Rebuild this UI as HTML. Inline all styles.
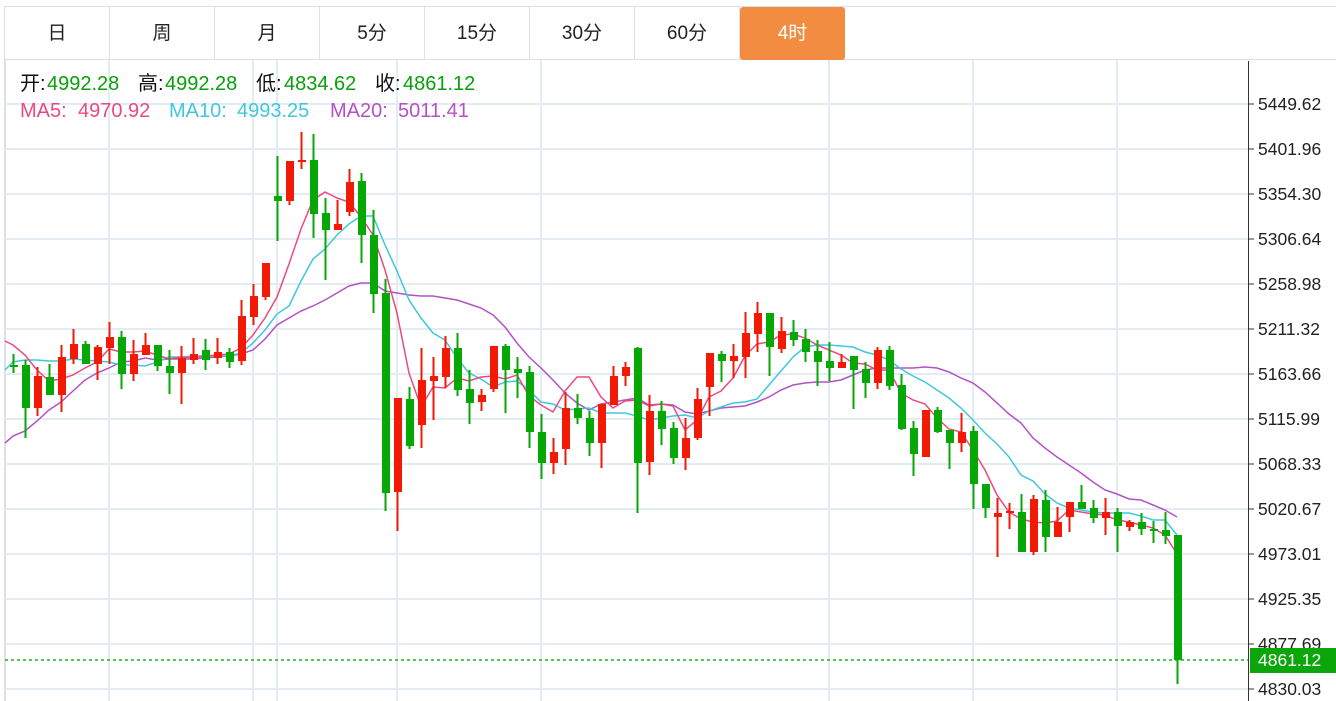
<!DOCTYPE html>
<html><head><meta charset="utf-8">
<style>
html,body{margin:0;padding:0;background:#fff;width:1336px;height:701px;overflow:hidden;font-family:"Liberation Sans","Noto Sans CJK SC",sans-serif;}
.tabs{position:absolute;left:4px;top:6px;width:1332px;height:54px;border-top:1px solid #dcdfe3;border-bottom:1px solid #dcdfe3;border-left:1px solid #dcdfe3;box-sizing:border-box;}
.tab{position:absolute;top:0;height:53px;width:105px;border-right:1px solid #dcdfe3;box-sizing:border-box;text-align:center;line-height:53px;font-size:19px;color:#222;}
.tab.on{background:#f28c41;color:#fff;border-radius:3px;border-right:none;top:0px;height:53px;}
.h{position:absolute;font-size:20px;white-space:pre;line-height:24px;}
.k{color:#111}.v{color:#09a009}
</style></head><body>
<svg width="1336" height="701" style="position:absolute;left:0;top:0" xmlns="http://www.w3.org/2000/svg">
<g stroke="#e4ecf3" stroke-width="2">
<line x1="5" y1="60" x2="5" y2="701" stroke="#dcdfe3"/>
<line x1="109" y1="60" x2="109" y2="701"/><line x1="253" y1="60" x2="253" y2="701"/><line x1="277" y1="60" x2="277" y2="701"/><line x1="397" y1="60" x2="397" y2="701"/><line x1="541" y1="60" x2="541" y2="701"/><line x1="829" y1="60" x2="829" y2="701"/><line x1="973" y1="60" x2="973" y2="701"/><line x1="1117" y1="60" x2="1117" y2="701"/>
<line x1="5" y1="104" x2="1248" y2="104"/><line x1="5" y1="149" x2="1248" y2="149"/><line x1="5" y1="194" x2="1248" y2="194"/><line x1="5" y1="239" x2="1248" y2="239"/><line x1="5" y1="284" x2="1248" y2="284"/><line x1="5" y1="329" x2="1248" y2="329"/><line x1="5" y1="374" x2="1248" y2="374"/><line x1="5" y1="419" x2="1248" y2="419"/><line x1="5" y1="464" x2="1248" y2="464"/><line x1="5" y1="509" x2="1248" y2="509"/><line x1="5" y1="554" x2="1248" y2="554"/><line x1="5" y1="599" x2="1248" y2="599"/><line x1="5" y1="644" x2="1248" y2="644"/><line x1="5" y1="689" x2="1248" y2="689"/>
</g>
<g fill="none" stroke-width="1.5">
<polyline stroke="#b352c6" points="5,443 13,436 25,431 37,421 49,410 61,402 73,391 85,380 97,373 109,368 121,362 133,361 145,358 157,360 169,359 181,359 193,359 205,358 217,357 229,356 241,354 253,350 265,339 277,325 289,318 301,311 313,306 325,300 337,293 349,286 361,283 373,283 385,291 397,293 409,295 421,296 433,296 445,298 457,300 469,304 481,308 493,315 505,327 517,343 529,357 541,368 553,380 565,393 577,403 589,410 601,404 613,402 625,400 637,398 649,405 661,404 673,405 685,412 697,414 709,411 721,408 733,407 745,406 757,402 769,397 781,390 793,385 805,383 817,382 829,382 841,380 853,375 865,370 877,368 889,368 901,368 913,368 925,367 937,368 949,372 961,378 973,383 985,392 997,403 1009,414 1021,423 1033,438 1045,448 1057,457 1069,465 1081,473 1093,482 1105,490 1117,494 1129,499 1141,500 1153,505 1165,510 1177,517"/>
<polyline stroke="#3fc8dc" points="5,370 13,362 25,360 37,360 49,361 61,361 73,359 85,360 97,361 109,362 121,365 133,365 145,366 157,362 169,357 181,357 193,356 205,356 217,356 229,356 241,353 253,343 265,330 277,314 289,306 301,281 313,259 325,249 337,235 349,224 361,216 373,216 385,245 397,271 409,300 421,318 433,333 445,340 457,358 469,373 481,379 493,387 505,382 517,381 529,390 541,402 553,404 565,410 577,409 589,408 601,413 613,413 625,413 637,416 649,420 661,418 673,416 685,415 697,418 709,411 721,407 733,403 745,402 757,399 769,385 781,371 793,357 805,347 817,345 829,345 841,346 853,347 865,352 877,355 889,360 901,369 913,376 925,382 937,390 949,398 961,408 973,420 985,433 997,444 1009,457 1021,475 1033,481 1045,494 1057,503 1069,508 1081,510 1093,512 1105,513 1117,513 1129,513 1141,516 1153,520 1165,520 1177,535"/>
<polyline stroke="#ea4a7d" points="5,341 13,345 25,355 37,370 49,381 61,379 73,375 85,368 97,362 109,349 121,352 133,352 145,351 157,355 169,359 181,357 193,358 205,356 217,355 229,354 241,348 253,335 265,318 277,297 289,264 301,229 313,200 325,192 337,198 349,202 361,217 373,235 385,270 397,313 409,373 421,407 433,387 445,388 457,378 469,381 481,377 493,376 505,379 517,375 529,396 541,405 553,412 565,391 577,377 589,377 601,397 613,408 625,401 637,400 649,406 661,404 673,406 685,430 697,420 709,397 721,391 733,378 745,356 757,344 769,342 781,335 793,334 805,338 817,345 829,350 841,355 853,363 865,364 877,370 889,370 901,393 913,400 925,404 937,418 949,429 961,432 973,450 985,470 997,495 1009,512 1021,519 1033,522 1045,523 1057,521 1069,510 1081,512 1093,514 1105,515 1117,520 1129,522 1141,525 1153,528 1165,535 1177,554"/>
</g>
<line x1="5" y1="660" x2="1248" y2="660" stroke="#1db41d" stroke-width="1.5" stroke-dasharray="3,3"/>
<line x1="1248.5" y1="61" x2="1248.5" y2="701" stroke="#333" stroke-width="1"/>
<g stroke="#333"><line x1="1248" y1="104" x2="1254" y2="104"/><line x1="1248" y1="149" x2="1254" y2="149"/><line x1="1248" y1="194" x2="1254" y2="194"/><line x1="1248" y1="239" x2="1254" y2="239"/><line x1="1248" y1="284" x2="1254" y2="284"/><line x1="1248" y1="329" x2="1254" y2="329"/><line x1="1248" y1="374" x2="1254" y2="374"/><line x1="1248" y1="419" x2="1254" y2="419"/><line x1="1248" y1="464" x2="1254" y2="464"/><line x1="1248" y1="509" x2="1254" y2="509"/><line x1="1248" y1="554" x2="1254" y2="554"/><line x1="1248" y1="599" x2="1254" y2="599"/><line x1="1248" y1="644" x2="1254" y2="644"/><line x1="1248" y1="689" x2="1254" y2="689"/></g>
<g font-family="Liberation Sans, sans-serif" font-size="17.5" fill="#222">
<text x="1258" y="110">5449.62</text><text x="1258" y="155">5401.96</text><text x="1258" y="200">5354.30</text><text x="1258" y="245">5306.64</text><text x="1258" y="290">5258.98</text><text x="1258" y="335">5211.32</text><text x="1258" y="380">5163.66</text><text x="1258" y="425">5115.99</text><text x="1258" y="470">5068.33</text><text x="1258" y="515">5020.67</text><text x="1258" y="560">4973.01</text><text x="1258" y="605">4925.35</text><text x="1258" y="650">4877.69</text><text x="1258" y="695">4830.03</text>
</g>
<rect x="1250" y="648" width="86" height="25" fill="#0aa60a"/>
<text x="1258" y="666" font-family="Liberation Sans, sans-serif" font-size="17.5" fill="#fff">4861.12</text>
<g id="cd"></g>
</svg>
<div class="tabs">
<div class="tab" style="left:0">日</div><div class="tab" style="left:105px">周</div><div class="tab" style="left:210px">月</div><div class="tab" style="left:315px">5分</div><div class="tab" style="left:420px">15分</div><div class="tab" style="left:525px">30分</div><div class="tab" style="left:630px">60分</div><div class="tab on" style="left:735px;width:105px">4时</div>
</div>
<div class="h k" style="left:20px;top:72px">开:</div><div class="h v" style="left:47px;top:72px">4992.28</div>
<div class="h k" style="left:138px;top:72px">高:</div><div class="h v" style="left:165px;top:72px">4992.28</div>
<div class="h k" style="left:256px;top:72px">低:</div><div class="h v" style="left:284px;top:72px">4834.62</div>
<div class="h k" style="left:375px;top:72px">收:</div><div class="h v" style="left:403px;top:72px">4861.12</div>
<div class="h" style="left:20px;top:99px;color:#ea4a7d">MA5:</div><div class="h" style="left:78px;top:99px;color:#ea4a7d">4970.92</div>
<div class="h" style="left:169px;top:99px;color:#3fc8dc">MA10:</div><div class="h" style="left:237px;top:99px;color:#3fc8dc">4993.25</div>
<div class="h" style="left:330px;top:99px;color:#b352c6">MA20:</div><div class="h" style="left:398px;top:99px;color:#b352c6">5011.41</div>
<script>
var d=[[365,365,354,373,'g'],[365,408,360,438,'g'],[408,376,367,416,'r'],[377,395,364,395,'g'],[395,357,345,412,'r'],[359,344,329,364,'r'],[344,364,341,364,'g'],[364,347,345,380,'r'],[348,337,322,364,'r'],[337,374,331,389,'g'],[374,354,340,381,'r'],[355,345,333,355,'r'],[345,366,345,371,'g'],[366,373,350,394,'g'],[373,358,346,404,'r'],[360,354,338,364,'r'],[350,360,339,370,'g'],[358,352,338,364,'r'],[352,362,348,368,'g'],[361,316,300,365,'r'],[317,296,284,325,'r'],[297,263,263,300,'r'],[196,201,156,241,'g'],[201,161,161,205,'r'],[162,160,132,169,'r'],[160,214,134,238,'g'],[213,230,198,280,'g'],[230,224,200,230,'r'],[212,182,169,216,'r'],[181,235,173,263,'g'],[235,294,210,313,'g'],[293,493,279,511,'g'],[492,398,398,531,'r'],[399,446,387,449,'g'],[425,380,348,448,'r'],[381,376,357,420,'r'],[377,348,336,388,'r'],[348,390,333,396,'g'],[389,403,370,424,'g'],[402,395,389,411,'r'],[389,346,346,392,'r'],[346,370,344,413,'g'],[369,373,357,398,'g'],[372,432,366,448,'g'],[432,463,414,479,'g'],[463,452,438,474,'r'],[449,408,392,465,'r'],[408,418,394,424,'g'],[418,443,411,456,'g'],[443,404,404,468,'r'],[405,376,366,405,'r'],[376,367,362,386,'r'],[348,463,347,513,'g'],[462,411,395,475,'r'],[411,429,401,445,'g'],[428,458,422,464,'g'],[458,438,418,470,'r'],[438,399,388,440,'r'],[387,353,353,416,'r'],[354,361,351,382,'g'],[361,356,344,378,'r'],[357,333,312,378,'r'],[334,313,302,352,'r'],[313,347,313,376,'g'],[349,331,317,353,'r'],[332,340,320,346,'g'],[339,352,329,362,'g'],[351,362,340,386,'g'],[361,368,342,381,'g'],[368,362,354,368,'r'],[356,370,356,409,'g'],[369,383,362,398,'g'],[383,350,347,389,'r'],[350,386,346,390,'g'],[385,429,374,430,'g'],[428,454,421,476,'g'],[457,410,410,457,'r'],[410,432,407,433,'g'],[430,443,430,469,'g'],[443,432,413,452,'r'],[431,484,426,509,'g'],[484,508,484,518,'g'],[517,513,498,557,'r'],[513,511,503,529,'r'],[512,552,494,552,'g'],[552,499,495,555,'r'],[500,537,490,552,'g'],[537,522,507,537,'r'],[517,502,502,532,'r'],[502,509,485,509,'g'],[508,518,500,523,'g'],[518,512,498,535,'r'],[512,526,508,552,'g'],[527,522,520,531,'r'],[522,529,513,535,'g'],[529,531,521,543,'g'],[530,536,512,544,'g'],[535,660,535,684,'g']];
var s='';for(var i=0;i<d.length;i++){var x=13+12*i,o=d[i],c=o[4]=='g'?'#05a805':'#f21a05';var t=Math.min(o[0],o[1]),h=Math.max(Math.abs(o[1]-o[0]),2);
s+='<line x1="'+(x+.5)+'" y1="'+o[2]+'" x2="'+(x+.5)+'" y2="'+o[3]+'" stroke="'+c+'" stroke-width="2"/><rect x="'+(x-3)+'" y="'+t+'" width="8" height="'+h+'" fill="'+c+'"/>';}
document.getElementById('cd').innerHTML=s;
</script>
</body></html>
